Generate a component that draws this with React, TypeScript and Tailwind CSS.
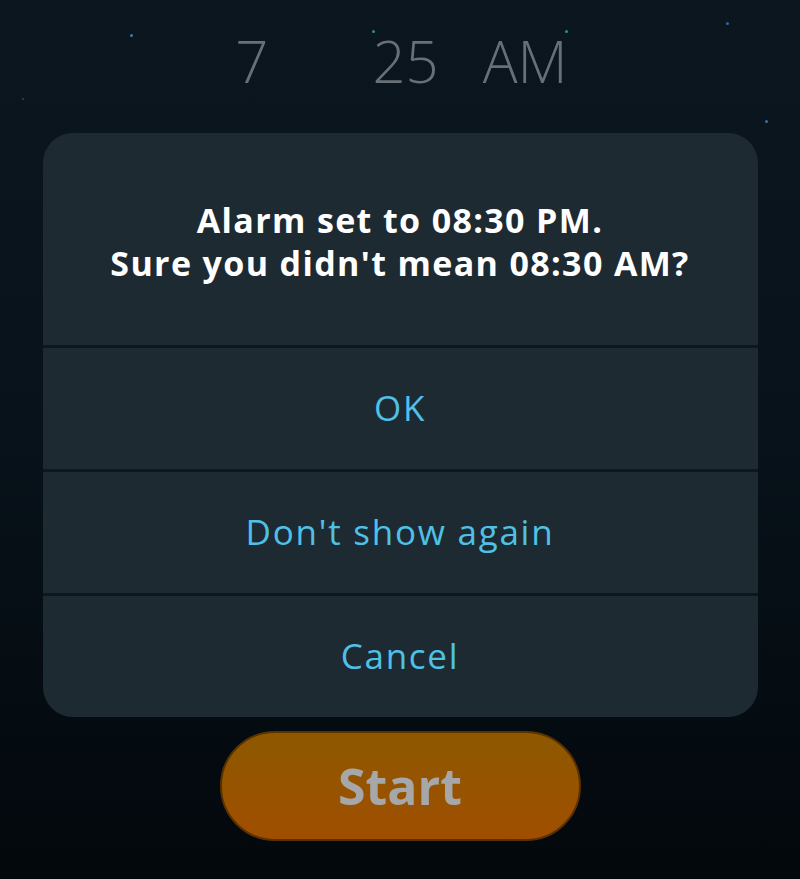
import React from "react";

const stars = [
  { x: 130, y: 34, s: 3, c: "bg-[#3d7ca0]" },
  { x: 372, y: 30, s: 3, c: "bg-[#2f8f7a]" },
  { x: 565, y: 30, s: 3, c: "bg-[#2f8f7a]" },
  { x: 726, y: 22, s: 3, c: "bg-[#3d5fa0]" },
  { x: 765, y: 120, s: 3, c: "bg-[#3d6fa0]" },
  { x: 22, y: 98, s: 2, c: "bg-[#2a4a60]" },
];

export default function App() {
  const font = { fontFamily: '"Open Sans", "Noto Sans", sans-serif' };

  return (
    <div
      className="relative w-[800px] h-[879px] overflow-hidden bg-gradient-to-b from-[#0b161e] via-[#08121a] to-[#03080c] flex flex-col items-center"
      style={font}
    >
      {/* faint stars */}
      {stars.map((st, i) => (
        <div
          key={i}
          className={`absolute rounded-full ${st.c}`}
          style={{ left: st.x, top: st.y, width: st.s, height: st.s }}
        />
      ))}

      {/* time picker behind the dialog */}
      <div className="h-[133px] w-full flex items-start justify-center pt-[32px] text-[#687076] text-[58px] font-light leading-none">
        <span className="w-[36px] text-right mr-[104px]">7</span>
        <span className="mr-[44px]">25</span>
        <span>AM</span>
      </div>

      {/* dialog */}
      <div className="w-[715px] rounded-[30px] bg-[#1e2a32] overflow-hidden flex flex-col">
        <div className="h-[212px] flex flex-col items-center justify-center text-white text-[34px] font-bold leading-[43px] tracking-[0.04em] pt-[6px]">
          <p>Alarm set to 08:30 PM.</p>
          <p>Sure you didn't mean 08:30 AM?</p>
        </div>
        {["OK", "Don't show again", "Cancel"].map((label) => (
          <button
            key={label}
            className="h-[124px] w-full border-t-[3px] border-[#0e171d] flex items-center justify-center text-[#4fc0e6] text-[35px] font-medium tracking-[0.05em]"
          >
            {label}
          </button>
        ))}
      </div>

      {/* start button */}
      <button className="mt-[14px] w-[361px] h-[110px] rounded-full bg-gradient-to-b from-[#8d5800] to-[#a04e00] border-2 border-[#5a3200] flex items-center justify-center text-[#a5a7a8] text-[50px] font-bold leading-none">
        Start
      </button>
    </div>
  );
}
